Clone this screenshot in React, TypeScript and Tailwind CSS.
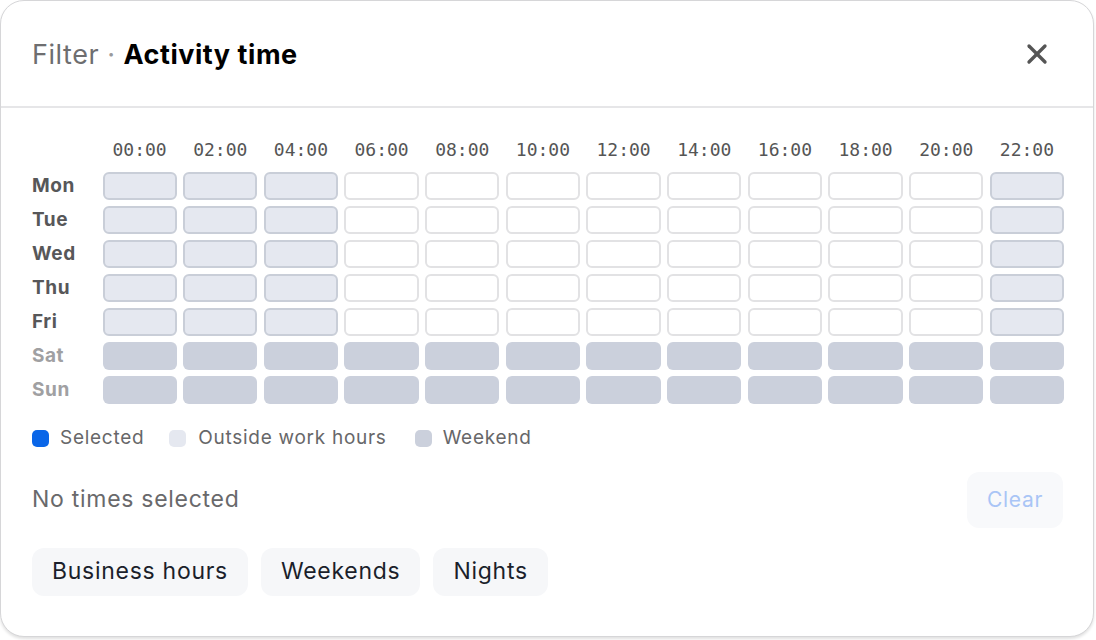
import { X } from "lucide-react";

const hours = ["00:00", "02:00", "04:00", "06:00", "08:00", "10:00", "12:00", "14:00", "16:00", "18:00", "20:00", "22:00"];
const days = ["Mon", "Tue", "Wed", "Thu", "Fri", "Sat", "Sun"];

function cellClass(day: number, col: number) {
  if (day >= 5) return "bg-[#cbd0dc]";
  if (col < 3 || col === 11) return "bg-[#e5e8f0] border-2 border-[#c9ced8]";
  return "bg-white border-2 border-[#e2e2e4]";
}

export default function App() {
  return (
    <div className="min-h-screen bg-white tracking-[0.045em]" style={{ fontFamily: "Inter, 'Noto Sans', sans-serif" }}>
      <div className="w-[1094px] h-[637px] rounded-[24px] border border-[#d6d6d8] bg-white shadow-[0_2px_3px_rgba(0,0,0,0.12)] overflow-hidden">
        <div className="h-[107px] flex items-center justify-between pl-[31px] pr-[40px] pt-[3px] border-b-2 border-[#e6e6e8]">
          <h1 className="text-[27px] tracking-[0.02em]">
            <span className="text-[#6e6e70]">Filter</span>
            <span className="text-[#9a9a9c] mx-[8px]">·</span>
            <span className="font-bold text-black">Activity time</span>
          </h1>
          <X className="w-[32px] h-[32px] text-[#555] -mt-[3px]" strokeWidth={2.5} />
        </div>

        <div className="px-[31px] pt-[30px]">
          <div className="grid grid-cols-[64px_repeat(12,1fr)] gap-x-[6.5px] gap-y-[6px] w-[1032px]">
            <div />
            {hours.map((h) => (
              <div key={h} className="text-center text-[18px] tracking-normal text-[#555] h-[28px] leading-[24px]" style={{ fontFamily: "'DejaVu Sans Mono', monospace" }}>
                {h}
              </div>
            ))}
            {days.map((d, di) => (
              <>
                <div key={d} className={`text-[19px] font-bold leading-[28px] tracking-[0.03em] ${di >= 5 ? "text-[#a0a0a2]" : "text-[#575759]"}`}>
                  {d}
                </div>
                {hours.map((h, ci) => (
                  <div key={d + h} className={`h-[28px] rounded-[6px] ${cellClass(di, ci)}`} />
                ))}
              </>
            ))}
          </div>

          <div className="flex items-center mt-[20px] text-[19px] text-[#676769]">
            <span className="w-[17px] h-[17px] rounded-[5px] bg-[#0a66e8] mr-[11px]" />
            <span>Selected</span>
            <span className="w-[17px] h-[17px] rounded-[5px] bg-[#e5e8f0] ml-[25px] mr-[12px]" />
            <span>Outside work hours</span>
            <span className="w-[17px] h-[17px] rounded-[5px] bg-[#cbd0dc] ml-[28px] mr-[11px]" />
            <span>Weekend</span>
          </div>

          <div className="flex items-center justify-between mt-[19px]">
            <span className="text-[23px] text-[#69696b]">No times selected</span>
            <button className="w-[96px] h-[56px] mr-[-1px] rounded-[12px] bg-[#f8f9fb] text-[21px] text-[#a9c5f6]">Clear</button>
          </div>

          <div className="flex gap-[13px] mt-[20px]">
            {["Business hours", "Weekends", "Nights"].map((p) => (
              <button key={p} className="h-[48px] px-[20px] rounded-[12px] bg-[#f6f7f9] text-[23px] text-[#1b1f2b]">
                {p}
              </button>
            ))}
          </div>
        </div>
      </div>
    </div>
  );
}
